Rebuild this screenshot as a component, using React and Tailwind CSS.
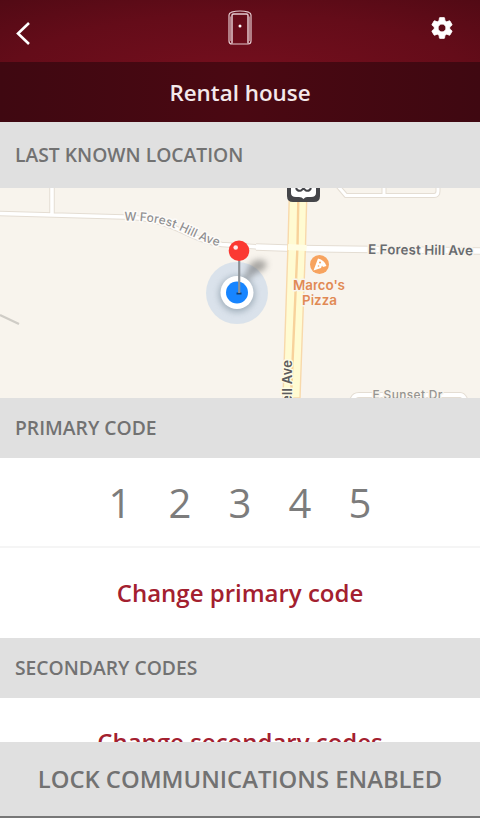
import React from "react";

function SectionHeader({ children, className }) {
  return (
    <h2 className={`flex shrink-0 items-center bg-[#e0e0e0] px-[15px] text-[19.300px] font-semibold text-[#727272] ${className}`}>
      {children}
    </h2>
  );
}

function DoorIcon() {
  return (
    <svg width="26" height="38" viewBox="0 0 26 38" fill="none" stroke="#e3c9ce">
      <path d="M2 31V6Q2 4 4.500 3.200Q13 .8 21.500 3.200Q24 4 24 6V32Q24 35 21 35H5Q2 35 2 32Z" strokeWidth="1.200" />
      <path d="M5 34.500V6.200Q5 5 6.500 5H19.500Q21 5 21 6.200V34.500" strokeWidth="1.500" />
      <path d="M3.500 7.500V32M22.500 7.500V32" strokeWidth=".6" />
      <circle cx="13" cy="17" r="1.500" fill="#fff" stroke="none" />
    </svg>
  );
}

function GearIcon() {
  return (
    <svg width="26" height="26" viewBox="0 0 24 24" fill="#fff" stroke="#fff" strokeWidth=".7" strokeLinejoin="round">
      <path d="M19.140 12.940c.04-.3.060-.61.060-.94 0-.32-.020-.64-.070-.94l2.030-1.580c.18-.14.230-.41.120-.61l-1.920-3.320c-.12-.22-.37-.29-.59-.22l-2.390.96c-.5-.38-1.030-.7-1.620-.94l-.36-2.540c-.04-.24-.24-.41-.48-.41h-3.840c-.24 0-.43.17-.47.41l-.36 2.540c-.59.24-1.130.57-1.620.94l-2.390-.96c-.22-.08-.47 0-.59.22L2.740 8.870c-.12.210-.08.470.12.610l2.030 1.580c-.05.3-.09.630-.09.940s.020.640.070.940l-2.030 1.580c-.18.140-.23.410-.12.610l1.920 3.320c.12.220.37.290.59.220l2.390-.96c.5.380 1.030.7 1.620.94l.36 2.540c.05.240.24.410.48.410h3.840c.24 0 .44-.17.470-.41l.36-2.540c.59-.24 1.130-.56 1.620-.94l2.390.96c.22.080.47 0 .59-.22l1.920-3.320c.12-.22.070-.47-.12-.61l-2.010-1.580zM12 15.600c-1.980 0-3.600-1.620-3.600-3.600s1.620-3.600 3.600-3.600 3.600 1.620 3.600 3.600-1.620 3.600-3.600 3.600z" />
    </svg>
  );
}

function Road({ d, width }) {
  return (
    <>
      <path d={d} stroke="#e4ddd3" strokeWidth={width + 2} />
      <path d={d} stroke="#fff" strokeWidth={width} />
    </>
  );
}

function LocationMap() {
  return (
    <svg className="block shrink-0 font-['Inter','Liberation_Sans',sans-serif]" width="480" height="210" viewBox="0 188 480 210" fill="none">
      <defs>
        <filter id="soft" x="-60%" y="-60%" width="220%" height="220%">
          <feGaussianBlur stdDeviation="3" />
        </filter>
        <path id="forest-hill" d="M124 220.500C151 221 163 223 180 230.500C196 238 207 244 228 248.500" />
      </defs>
      <rect y="188" width="480" height="210" fill="#f8f4ed" />
      <g strokeLinejoin="round">
        <Road d="M52 180V214M-4 213.500L124 217C173 218 190 241 222 244.500L258 247L300 248" width={3.5} />
        <Road d="M256 247L300 248.500L484 251" width={5.5} />
        <Road d="M337 185L346 195.500H434Q438 195.500 438 191V185M384 185V195" width={3} />
        <Road d="M352 402Q353 395 359 395H460Q464 395 466 402" width={4} />
      </g>
      <path d="M0 315L19 324" stroke="#cfccc6" strokeWidth="2.200" />
      <path d="M289.500 188H307L305.500 245L300 398H283L288 245Z" fill="#fffbd2" stroke="#f8d9ab" strokeWidth="1.400" />
      <path d="M298.500 188L297.500 246L291 398" stroke="#f8d29b" strokeWidth="2.400" />
      <path d="M288 247L306.500 248" stroke="#fffde3" strokeWidth="6" />
      <path d="M287 186H320V196Q320 202 314 202H293Q287 202 287 196Z" fill="#45464a" />
      <path d="M291 186H316V193Q316 197 311 197H307Q305 197 303.500 199Q302 197 299 197H296Q291 197 291 193Z" fill="#fff" />
      <path d="M296 188Q297.500 191.500 301 190.500L303.500 188.500L306 190.500Q309.500 191.500 311 188" stroke="#45464a" strokeWidth="2" />
      <g stroke="#f8f4ed" strokeWidth="3" paintOrder="stroke" strokeLinejoin="round">
        <text fontSize="12" fontWeight="500" fill="#909092" stroke="#fdfbf8">
          <textPath href="#forest-hill" textLength="99">W Forest Hill Ave</textPath>
        </text>
        <text x="368" y="254" fontSize="13.500" fontWeight="600" fill="#696b6f" textLength="105" transform="rotate(.7 368 254)">E Forest Hill Ave</text>
        <text x="372.500" y="399" fontSize="12" fontWeight="500" fill="#969491" textLength="70">E Sunset Dr</text>
        <text x="319" y="289.500" fontSize="13.500" fontWeight="600" fill="#e18a55" textAnchor="middle" textLength="52">Marco's</text>
        <text x="319.500" y="304.500" fontSize="13.500" fontWeight="600" fill="#e18a55" textAnchor="middle" textLength="35">Pizza</text>
        <text x="292" y="403" fontSize="13" fontWeight="600" fill="#5c5c5e" stroke="#fffbe4" transform="rotate(-90 292 403)" textLength="43">ell Ave</text>
      </g>
      <circle cx="319.500" cy="264.500" r="9.500" fill="#f7a35f" />
      <path d="M318 258.500Q324.500 260 326.500 266L323 267L322 265.500L321 268L313.500 270.500Z" fill="#fff" />
      <circle cx="318.500" cy="266" r=".8" fill="#f7a35f" />
      <circle cx="320" cy="262.500" r="1" fill="#f7a35f" />
      <circle cx="237" cy="293" r="31" fill="#d6e0ea" opacity=".9" />
      <circle cx="237" cy="294" r="18" fill="#7b8e9b" opacity=".6" filter="url(#soft)" />
      <path d="M241 286L250 264Q259 256 267 263Q266 271 254 274Z" fill="#5a5a5a" opacity=".5" filter="url(#soft)" />
      <circle cx="237" cy="292.500" r="16.500" fill="#fff" />
      <circle cx="237" cy="292.500" r="11" fill="#1785ff" />
      <path d="M236.500 293.500H241.500" stroke="#153e70" strokeWidth="2" />
      <path d="M239.200 260V293" stroke="#8d9297" strokeWidth="2.200" />
      <circle cx="239" cy="250.800" r="10.300" fill="#fb3932" />
      <circle cx="235.700" cy="247.500" r="2.300" fill="#fff" opacity=".9" />
    </svg>
  );
}

export default function App() {
  return (
    <main className="flex h-[818px] w-[480px] flex-col overflow-hidden bg-white font-['Open_Sans',sans-serif]">
      <header className="flex h-[122px] shrink-0 flex-col bg-[radial-gradient(ellipse_420px_120px_at_50%_80px,#760f1e_0%,#640c19_55%,#4b0913_100%)] text-white">
        <div className="flex h-[62px] shrink-0 justify-between px-[15px]">
          <button className="flex w-[36px] items-start pt-[21px]" aria-label="Back">
            <svg width="17" height="25" viewBox="0 0 17 25" fill="none" stroke="#fff" strokeWidth="2.600"><path d="M14 2L3 12.500L14 23" /></svg>
          </button>
          <div className="pt-[9px]"><DoorIcon /></div>
          <button className="flex w-[36px] items-start pt-[15px]" aria-label="Settings"><GearIcon /></button>
        </div>
        <h1 className="flex h-[60px] items-center justify-center bg-[linear-gradient(90deg,#3f0811,#4a0812_50%,#3f0811)] pt-[1px] text-[22.400px] font-semibold text-[#f4e9eb]">
          Rental house
        </h1>
      </header>
      <SectionHeader className="h-[66px] pt-[1px]">LAST KNOWN LOCATION</SectionHeader>
      <LocationMap />
      <SectionHeader className="h-[60px]">PRIMARY CODE</SectionHeader>
      <section className="flex h-[180px] shrink-0 flex-col">
        <div className="flex h-[90px] items-center justify-center border-b-2 border-[#f5f5f5] pt-[2px] text-[40px] text-[#7c7c7c]">
          {[1, 2, 3, 4, 5].map((n) => <span className="w-[60px] text-center" key={n}>{n}</span>)}
        </div>
        <button className="h-[90px] text-[24px] font-semibold text-[#a3202f]">Change primary code</button>
      </section>
      <SectionHeader className="h-[60px]">SECONDARY CODES</SectionHeader>
      <section className="flex h-[44px] shrink-0 items-start justify-center overflow-hidden pt-[26px] text-[24px] font-semibold text-[#a3202f]">
        Change secondary codes
      </section>
      <footer className="flex h-[76px] shrink-0 items-center justify-center border-b-2 border-[#777] bg-[#e0e0e0] pt-[2px] text-[23.800px] font-semibold text-[#727272]">
        LOCK COMMUNICATIONS ENABLED
      </footer>
    </main>
  );
}
